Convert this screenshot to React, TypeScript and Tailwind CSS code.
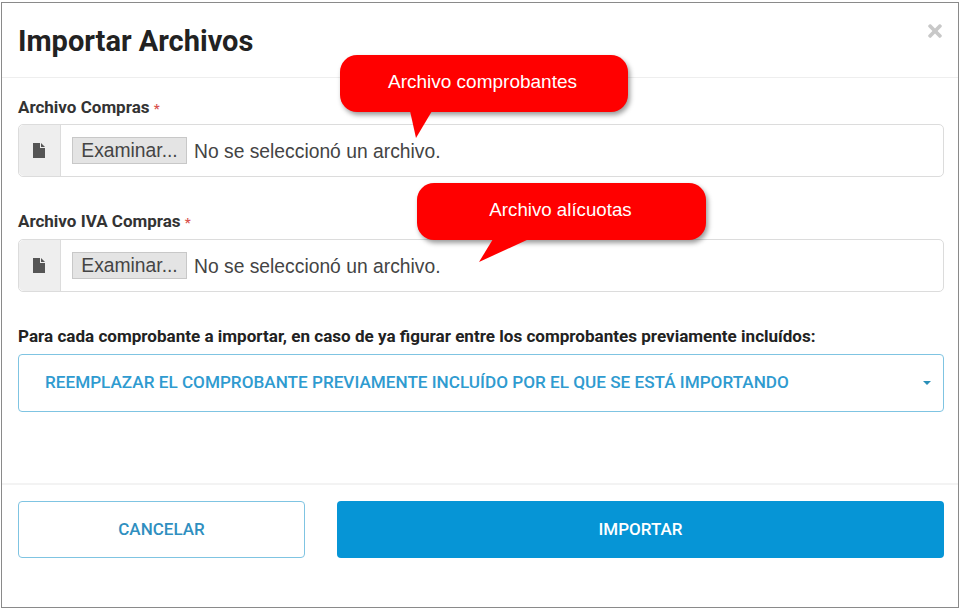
// App.tsx
import React from "react";
import { FaTimes } from "react-icons/fa";

const FileIcon: React.FC = () => (
  <svg width="13" height="15" viewBox="0 0 13 15" className="fill-[#555]">
    <path d="M0 0h7v5h5v10H0z" />
    <path d="M8 0l4 4H8z" />
  </svg>
);

const FileField: React.FC<{ label: string; inputGap: string }> = ({ label, inputGap }) => (
  <div>
    <label className="block h-[18px] text-[17px] leading-[18px] font-bold text-[#333] font-['Roboto',sans-serif]">
      {label} <span className="text-[13px] text-[#d9534f]">*</span>
    </label>
    <div className={`${inputGap} flex h-[53px] rounded-[5px] border border-[#dcdcdc] bg-white`}>
      <div className="flex w-[42px] shrink-0 items-center justify-center rounded-l-[5px] border-r border-[#dcdcdc] bg-[#eeeeee]">
        <FileIcon />
      </div>
      <div className="flex items-center pl-[11px] font-['Liberation_Sans',sans-serif] text-[19.3px] text-[#444]">
        <span className="flex h-[27px] w-[115px] items-center justify-center border border-[#c8c8c8] bg-[#e4e4e4] pt-[2px]">
          Examinar...
        </span>
        <span className="ml-[7px] pt-[3px]">No se seleccionó un archivo.</span>
      </div>
    </div>
  </div>
);

const App: React.FC = () => {
  return (
    <div className="h-[610px] w-[961px] bg-white pt-[2px] pr-[2px] pb-[2px] pl-[1px]">
      <div className="relative flex h-[606px] flex-col border border-[#8a8a8a] bg-white font-['Roboto',sans-serif]">
        {/* cabecera */}
        <div className="flex h-[75px] shrink-0 items-start justify-between border-b border-[#eeeeee] pl-[16px] pr-[13px]">
          <h1 className="mt-[20px] text-[29px] leading-[36px] font-bold text-[#222]">
            Importar Archivos
          </h1>
          <FaTimes className="mt-[18px] text-[20px] text-[#c8c8c8]" />
        </div>

        {/* formulario */}
        <div className="flex flex-1 flex-col pl-[16px] pr-[14px]">
          <div className="mt-[20px]">
            <FileField label="Archivo Compras" inputGap="mt-[8px]" />
          </div>
          <div className="mt-[35px]">
            <FileField label="Archivo IVA Compras" inputGap="mt-[9px]" />
          </div>
          <p className="mt-[35px] h-[18px] text-[17.07px] leading-[18px] font-bold whitespace-nowrap text-[#222]">
            Para cada comprobante a importar, en caso de ya figurar entre los comprobantes previamente incluídos:
          </p>
          <div className="mt-[9px] flex h-[58px] items-center justify-between rounded-[4px] border border-[#7fc4e2] pl-[26px] pr-[12px] text-[17.15px] font-medium text-[#2f9bd0]">
            <span>REEMPLAZAR EL COMPROBANTE PREVIAMENTE INCLUÍDO POR EL QUE SE ESTÁ IMPORTANDO</span>
            <span className="h-0 w-0 border-x-[4px] border-t-[4px] border-x-transparent border-t-[#2a8fb8]" />
          </div>
        </div>

        {/* pie */}
        <div className="flex h-[124px] shrink-0 gap-[32px] border-t-2 border-[#f3f3f3] pt-[16px] pr-[14px] pl-[16px]">
          <button className="flex h-[57px] w-[287px] items-center justify-center rounded-[4px] border border-[#7fc4e2] text-[17px] font-medium text-[#2f8fc0]">
            CANCELAR
          </button>
          <button className="flex h-[57px] flex-1 items-center justify-center rounded-[4px] bg-[#0695d6] text-[17px] font-medium text-white">
            IMPORTAR
          </button>
        </div>

        {/* globos */}
        <div className="absolute top-[52px] left-[338px] flex h-[57px] w-[288px] items-center justify-center rounded-[17px] bg-[#ff0000] pr-[3px] pb-[2px] font-['Liberation_Sans',sans-serif] text-[19px] text-white shadow-[2px_3px_5px_rgba(0,0,0,0.4)]">
          Archivo comprobantes
          <svg width="22" height="28" viewBox="0 0 22 28" className="absolute top-[56px] left-[70px] fill-[#ff0000]">
            <path d="M0 0h22L6 27z" />
          </svg>
        </div>
        <div className="absolute top-[180px] left-[415px] flex h-[57px] w-[289px] items-center justify-center rounded-[17px] bg-[#ff0000] pr-[2px] pb-[3px] font-['Liberation_Sans',sans-serif] text-[18.7px] text-white shadow-[2px_3px_5px_rgba(0,0,0,0.4)]">
          Archivo alícuotas
          <svg width="50" height="24" viewBox="0 0 50 24" className="absolute top-[56px] left-[62px] fill-[#ff0000]">
            <path d="M14 0h36L0 23z" />
          </svg>
        </div>
      </div>
    </div>
  );
};

export default App;
